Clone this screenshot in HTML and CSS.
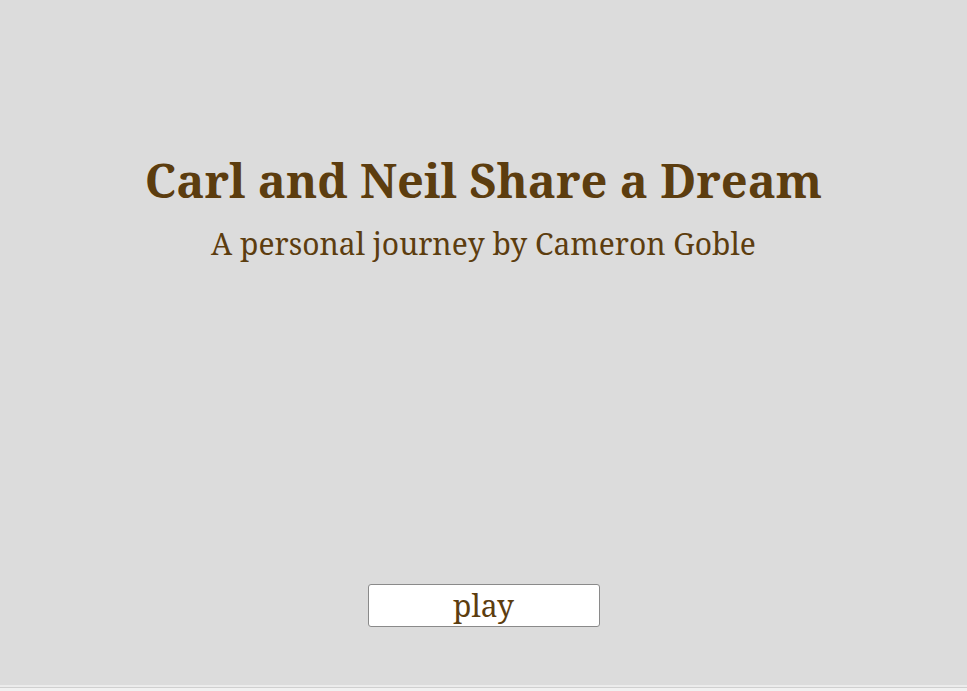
FILE: index.html
```html
<!DOCTYPE html>
<html>
<head>
<meta charset="utf-8">
<link rel="stylesheet" href="styles.css">
</head>
<body>
<div class="stage">
  <header class="intro">
    <h1 class="title">Carl and Neil Share a Dream</h1>
    <p class="subtitle">A personal journey by Cameron Goble</p>
  </header>
  <button class="play">play</button>
</div>
<div class="footer-line"></div>
</body>
</html>
```

FILE: styles.css
```css
html, body {
  margin: 0;
  padding: 0;
  background: #f1f1f1;
}
body {
  font-family: "Noto Serif", "DejaVu Serif", serif;
  color: #5c3d0f;
}
.stage {
  height: 685px;
  background: #dcdcdc;
  display: flex;
  flex-direction: column;
  align-items: center;
  border-bottom: 2px solid #ececec;
}
.intro {
  text-align: center;
  padding-top: 150px;
}
.title {
  margin: 0;
  font-size: 47px;
  font-weight: 700;
  line-height: 60px;
}
.subtitle {
  margin: 14px 0 0 0;
  font-size: 30px;
  line-height: 40px;
}
.play {
  margin-top: auto;
  margin-bottom: 58px;
  width: 232px;
  height: 43px;
  background: #fff;
  border: 1px solid #8a8a8a;
  border-radius: 3px;
  font-family: "Noto Serif", "DejaVu Serif", serif;
  font-size: 30px;
  color: #5c3d0f;
  padding: 0;
  line-height: 40px;
}
.footer-line {
  height: 1px;
  background: #d0d0d0;
}
```
